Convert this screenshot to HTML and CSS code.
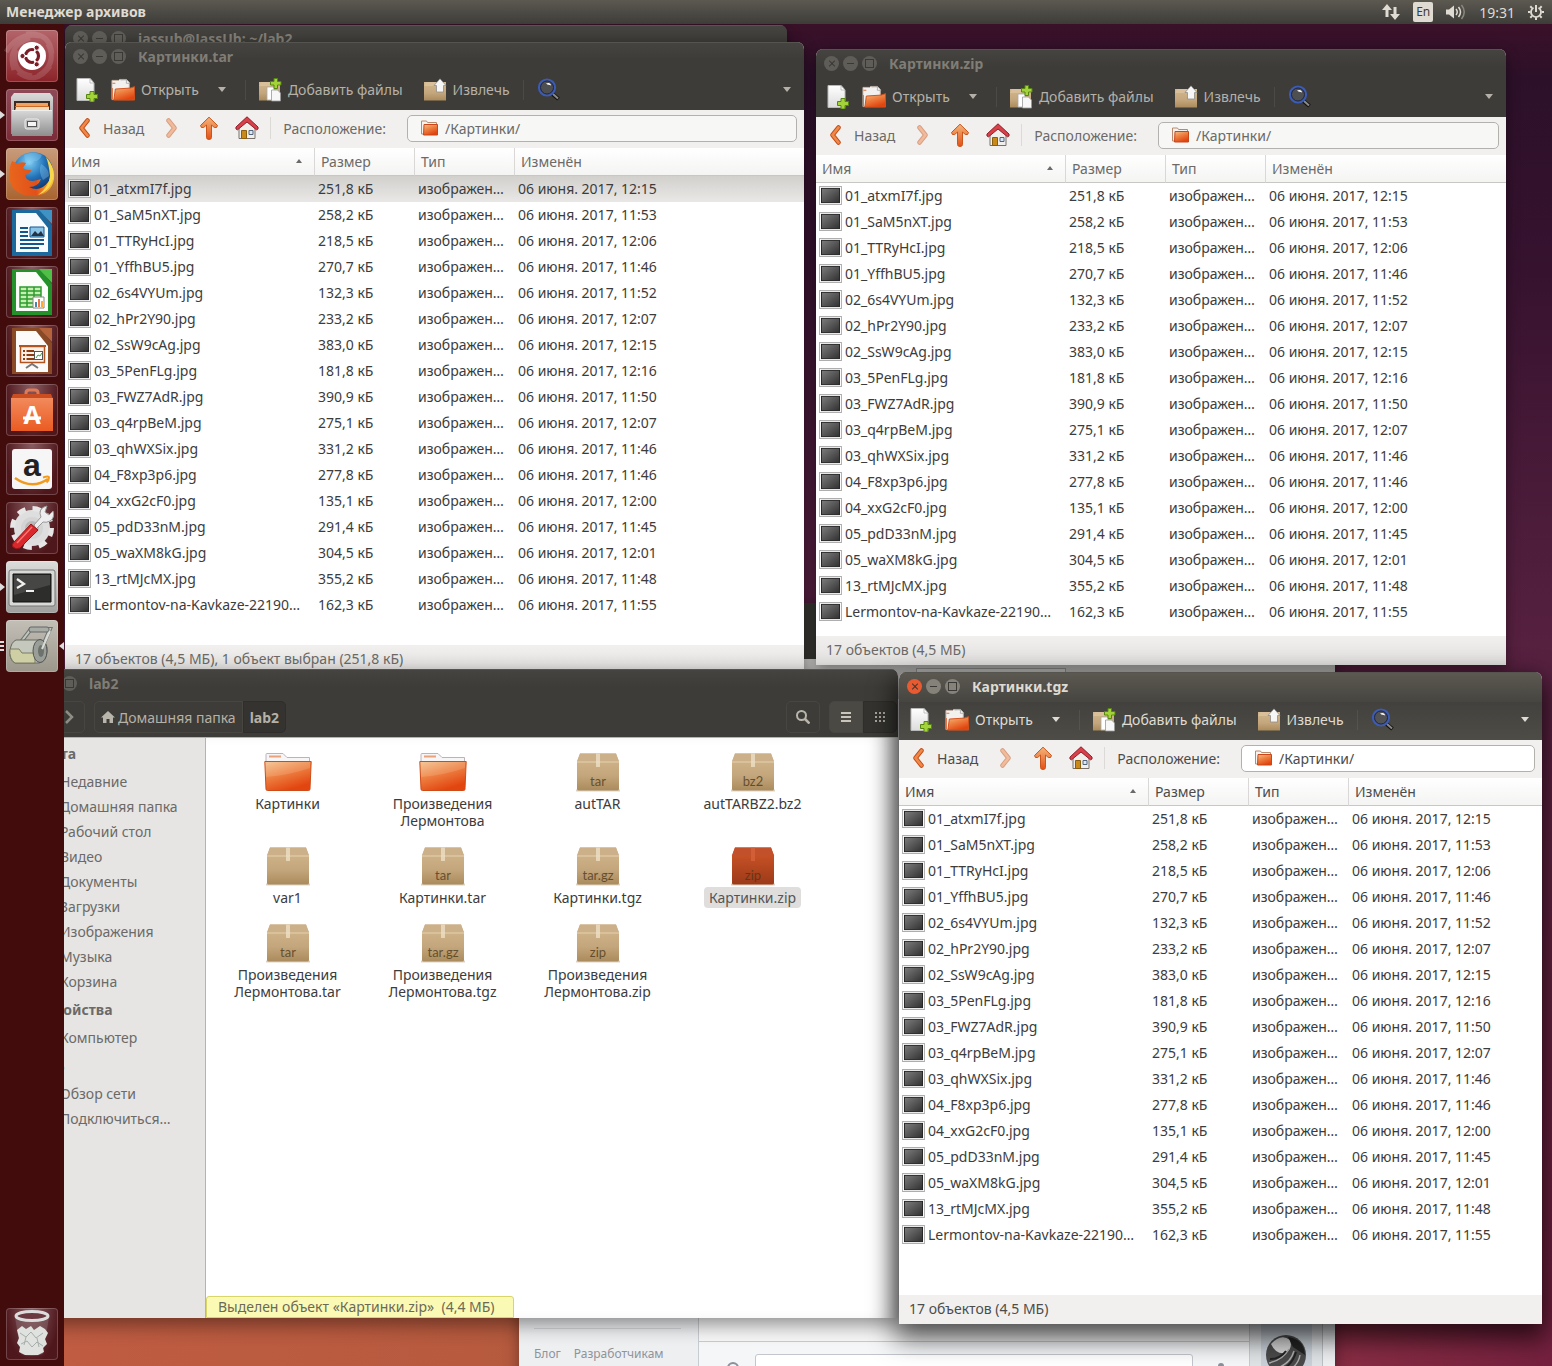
FILE: index.html
```html
<!DOCTYPE html>
<html lang="ru">
<head>
<meta charset="utf-8">
<title>Менеджер архивов</title>
<meta name="viewport" content="width=device-width, initial-scale=1">
<link rel="stylesheet" href="styles.css">
</head>
<body>
<svg class="sprite" width="0" height="0" aria-hidden="true">
  <defs>
    <linearGradient id="g-orange" x1="0" y1="0" x2="0" y2="1"><stop offset="0" stop-color="#f3b57c"/><stop offset="1" stop-color="#e64f14"/></linearGradient>
    <linearGradient id="g-folder" x1="0" y1="0" x2=".5" y2="1"><stop offset="0" stop-color="#f4c08a"/><stop offset=".45" stop-color="#ee8546"/><stop offset="1" stop-color="#e2450f"/></linearGradient>
    <linearGradient id="g-box" x1="0" y1="0" x2="0" y2="1"><stop offset="0" stop-color="#d2b78d"/><stop offset=".6" stop-color="#c4a67c"/><stop offset="1" stop-color="#a98b5c"/></linearGradient>
    <linearGradient id="g-boxred" x1="0" y1="0" x2="0" y2="1"><stop offset="0" stop-color="#d0562a"/><stop offset="1" stop-color="#9c3a18"/></linearGradient>
    <linearGradient id="g-paper" x1="0" y1="0" x2="0" y2="1"><stop offset="0" stop-color="#ffffff"/><stop offset="1" stop-color="#dcdcdc"/></linearGradient>
    <linearGradient id="g-dark" x1="0" y1="0" x2="1" y2="1"><stop offset="0" stop-color="#7d7d7d"/><stop offset="1" stop-color="#303030"/></linearGradient>
    <linearGradient id="g-steel" x1="0" y1="0" x2="0" y2="1"><stop offset="0" stop-color="#d9d9d9"/><stop offset="1" stop-color="#8e8e8e"/></linearGradient>
    <radialGradient id="g-globe" cx=".4" cy=".25" r=".8"><stop offset="0" stop-color="#7fd0f5"/><stop offset=".5" stop-color="#2372b8"/><stop offset="1" stop-color="#0c2e63"/></radialGradient>
    <linearGradient id="g-fox" x1="0" y1="0" x2="1" y2="0"><stop offset="0" stop-color="#e8661c"/><stop offset=".6" stop-color="#e2501a"/><stop offset="1" stop-color="#f9c936"/></linearGradient>
    <linearGradient id="g-bag" x1="0" y1="0" x2="0" y2="1"><stop offset="0" stop-color="#f28a5c"/><stop offset="1" stop-color="#ea5b22"/></linearGradient>
  </defs>

  <symbol id="i-thumb" viewBox="0 0 24 20"><rect x=".5" y=".5" width="23" height="19" fill="#fff" stroke="#aaa"/><rect x="2.500" y="2.500" width="19" height="15" fill="url(#g-dark)" stroke="#222"/></symbol>
  <symbol id="i-new" viewBox="0 0 24 24"><path d="M2 .5h13l4 4.500V22.500H2z" fill="url(#g-paper)" stroke="#b9b9b9"/><path d="M15 .5V5h4z" fill="#fff" stroke="#aaa" stroke-width=".7"/><path d="M15 13.500h4v3h3.500v4H19V24h-4v-3.500h-3.500v-4H15z" fill="#a3d339" stroke="#56860f"/></symbol>
  <symbol id="i-open" viewBox="0 0 25 24"><path d="M1 2h7l1-1h7l3 3v18H1z" fill="#f3f1ef" stroke="#c9b9ad"/><path d="M10 1.500h6V5h4" fill="#fff" stroke="#999" stroke-width=".8"/><path d="M1.500 5h3M1.500 10v12" stroke="#e06a3a"/><path d="M4.500 11 20 10l4.500-1.500V22.500H3z" fill="url(#g-folder)" stroke="#d0501c"/></symbol>
  <symbol id="i-add" viewBox="0 0 24 24"><path d="M1 4h21v18.500H1z" fill="url(#g-box)"/><path d="M1 8 3 4h19v4z" fill="#d9c09a"/><path d="M9 9h7v13H9z" fill="#fff" stroke="#aaa" stroke-width=".8"/><path d="M13.500 12h6l3 3v8h-9z" fill="#f7f7f7" stroke="#999" stroke-width=".8"/><path d="M16 .5h3.500v3H23V7h-3.500v3.500H16V7h-3.500V3.500H16z" fill="#a3d339" stroke="#56860f"/></symbol>
  <symbol id="i-extract" viewBox="0 0 24 24"><path d="M1 4h22v18.500H1z" fill="url(#g-box)"/><path d="M1 8 3 4h18l2 4z" fill="#d9c09a"/><path d="M17 .8 23 7.500h-2.500V14h-7V7.500H11z" fill="#f6f6f6" stroke="#8d8d8d" stroke-width=".8"/></symbol>
  <symbol id="i-find" viewBox="0 0 24 24"><path d="m15.500 16 6 5" stroke="#14120f" stroke-width="4"/><path d="m16 16 5 4.500" stroke="#8a8a8a" stroke-width="2"/><circle cx="10" cy="9.500" r="8" fill="#5a5c63" fill-opacity=".6" stroke="#3c5bb4" stroke-width="2.200"/><circle cx="10" cy="9.500" r="6.500" fill="none" stroke="#1c2648"/><path d="M9 5.500c3-1.500 5 0 5 2-2-.8-3-.3-5-2z" fill="#fff"/></symbol>
  <symbol id="i-back" viewBox="0 0 12 20"><path d="M9.500 2.500 3.500 10l6 7.500" fill="none" stroke="#c24c16" stroke-width="4.500" stroke-linecap="round" stroke-linejoin="round"/><path d="M9.500 2.500 3.500 10l6 7.500" fill="none" stroke="#f0884a" stroke-width="2.800" stroke-linecap="round" stroke-linejoin="round"/></symbol>
  <symbol id="i-up" viewBox="0 0 20 24"><path d="M10 1.200 18.500 9.500q-.3 3-3.200 2L12.500 9v12.500a2.500 2 0 0 1-5 0V9l-2.800 2.500q-2.900 1-3.200-2z" fill="url(#g-orange)" stroke="#c9561c" stroke-linejoin="round"/></symbol>
  <symbol id="i-home" viewBox="0 0 24 24"><path d="M4 11 12 4l8 7v11.500H4z" fill="#f1efec" stroke="#77706a"/><path d="M6.500 14.500h5v8h-5z" fill="#c98a1a" stroke="#8b5d0e"/><path d="M14 14.500h4v4h-4z" fill="#dbe6f4" stroke="#53637a"/><path d="M12 .8 1 11q-.8 2.500 1.500 2.800L12 6l9.500 7.800Q23.800 13.500 23 11z" fill="#d8404a" stroke="#8f1f2a" stroke-linejoin="round"/></symbol>
  <symbol id="i-folder-s" viewBox="0 0 17 16"><path d="M.5 14V1h5l1 1.500h9V14z" fill="#f7f2ee" stroke="#b98a70"/><path d="M3 4.500h13.500V15H2.500z" fill="url(#g-folder)" stroke="#c8471a"/></symbol>
  <symbol id="i-folder" viewBox="0 0 48 40"><path d="M2 16V2.500q0-1 1-1h16l4 4h22.500V16z" fill="#f7f5f6" stroke="#b9b4bb"/><path d="M5 4.500h12" stroke="#e9a27c" stroke-width="2"/><path d="M.8 9.500h46.400L46 37q0 1.500-1.500 1.500h-41Q2 38.500 2 37z" fill="url(#g-folder)" stroke="#cf4c18"/><path d="M2 25q24-2 44-9V10H1.500z" fill="#fff" opacity=".13"/></symbol>
  <symbol id="i-box" viewBox="0 0 44 40"><path d="M0 38.500h44" stroke="#a08050" stroke-opacity=".35" stroke-width="2"/><path d="M4 1.500h36l3 8V37q0 1.500-1.500 1.500h-39Q1 38.500 1 37V9.500z" fill="url(#g-box)"/><path d="M4 1.500h36l3 8H1z" fill="#cbb08a"/><path d="M1 10h42" stroke="#e6d2b0"/><path d="M20 1.500h4V15h-4z" fill="#efe2c8" opacity=".75"/></symbol>
  <symbol id="i-box-sel" viewBox="0 0 44 40"><path d="M0 38.500h44" stroke="#a08050" stroke-opacity=".35" stroke-width="2"/><path d="M4 1.500h36l3 8V37q0 1.500-1.500 1.500h-39Q1 38.500 1 37V9.500z" fill="url(#g-boxred)"/><path d="M4 1.500h36l3 8H1z" fill="#c2502a"/><path d="M20 1.500h4V15h-4z" fill="#d4623a" opacity=".8"/></symbol>
</svg>

<header class="panel">
  <h1 class="panel-title">Менеджер архивов</h1>
  <div class="indicators">
    <svg width="18" height="16" viewBox="0 0 18 16" fill="#dfdbd2"><path d="M5 0 0 6h3.500v7h3V6H10zM13 16l-5-6h3.500V3h3v7H18z"/></svg>
    <span class="lang">En</span>
    <svg width="20" height="16" viewBox="0 0 20 16" fill="none" stroke="#dfdbd2" stroke-width="1.500"><path d="M0 5.500h3L8 1.500v13L3 10.500H0z" fill="#dfdbd2" stroke="none"/><path d="M10 5q2.500 3 0 6M12.500 3q4 5 0 10"/><path d="M15.500 1q5.500 7 0 14" stroke="#8b877f"/></svg>
    <time>19:31</time>
    <svg width="16" height="16" viewBox="0 0 16 16" fill="none" stroke="#dfdbd2"><path d="M5.500 3.700a5 5 0 1 0 5 0" stroke-width="1.800"/><path d="M8 1v7" stroke-width="2"/><path d="M0 8h2.500M13.500 8H16M8 13.500V16M2.300 2.300l1.800 1.800M13.700 2.300l-1.800 1.800M2.300 13.700l1.800-1.800M13.700 13.700l-1.800-1.800" stroke-width="2"/></svg>
  </div>
</header>

<main class="desktop">
  <section class="window browser" aria-label="Браузер">
    <div class="browser-title"></div>
    <div class="browser-bar"><span class="browser-tab"></span></div>
    <div class="browser-body">
      <nav class="site-nav"><a href="#blog">Блог</a><a href="#dev">Разработчикам</a></nav>
      <div class="site-main"><div class="compose">
        <svg width="12" height="12" viewBox="0 0 12 12" fill="none" stroke="#8b909b" stroke-width="2"><path d="M1 6a5 5 0 0 1 10 0"/></svg>
        <input class="message" aria-label="Сообщение">
        <svg width="12" height="12" viewBox="0 0 12 12" fill="#8b909b"><circle cx="6" cy="4" r="3"/></svg>
      </div></div>
      <aside class="site-chat"><svg width="40" height="40" viewBox="0 0 40 40"><circle cx="20" cy="20" r="20" fill="#4a4a4a"/><path d="M5 9Q15-2 24 5q3 8-4 13Q10 20 5 9z" fill="#d4d4d4"/><path d="M22 2q16 2 17 18L27 12z" fill="#222"/><path d="M3 28q14-3 20-14M8 34q16-4 20-18M18 38q14-6 16-18" stroke="#aaa" stroke-width="1.500" fill="none"/><path d="M4 24q10 0 16-8M12 37q14-6 18-20" stroke="#222" stroke-width="2" fill="none"/></svg></aside>
    </div>
  </section>

  <section class="window terminal" aria-label="Терминал">
    <div class="titlebar">
      <button class="wb close" aria-label="Закрыть"></button><button class="wb min" aria-label="Свернуть"></button><button class="wb max" aria-label="Развернуть"></button>
      <h2>jassub@JassUb: ~/lab2</h2>
    </div>
  </section>

  <section class="window files" aria-label="lab2">
    <div class="titlebar">
      <button class="wb close" aria-label="Закрыть"></button><button class="wb min" aria-label="Свернуть"></button><button class="wb max" aria-label="Развернуть"></button>
      <h2>lab2</h2>
    </div>
    <div class="pathbar">
      <button class="pb forward" aria-label="Вперёд"><svg width="9" height="14" viewBox="0 0 9 14" fill="none" stroke="#8f8c83" stroke-width="2.500"><path d="m1 1 6 6-6 6"/></svg></button>
      <div class="crumbs">
        <button class="pb"><svg width="14" height="12" viewBox="0 0 14 12" fill="#b9b5aa"><path d="M7 0 0 6.500h2V12h3.500V8h3v4H12V6.500h2z"/></svg>Домашняя папка</button>
        <button class="pb current">lab2</button>
      </div>
      <button class="pb square" aria-label="Поиск"><svg width="14" height="14" viewBox="0 0 14 14" fill="none" stroke="#b9b5aa" stroke-width="2"><circle cx="5.500" cy="5.500" r="4.500"/><path d="m9 9 4.500 4.500" stroke-width="2.500"/></svg></button>
      <div class="views">
        <button class="pb square raised" aria-label="Список"><svg width="10" height="10" viewBox="0 0 10 10" fill="#c9c5bb"><path d="M0 0h10v2H0zM0 4h10v2H0zM0 8h10v2H0z"/></svg></button>
        <button class="pb square current" aria-label="Значки"><svg width="10" height="10" viewBox="0 0 10 10" fill="#a9a69c"><path d="M0 0h2v2H0zM4 0h2v2H4zM8 0h2v2H8zM0 4h2v2H0zM4 4h2v2H4zM8 4h2v2H8zM0 8h2v2H0zM4 8h2v2H4zM8 8h2v2H8z"/></svg></button>
      </div>
    </div>
    <div class="files-body">
      <nav class="places">
        <h3>Места</h3>
        <a href="#recent">Недавние</a><a href="#home">Домашняя папка</a><a href="#desktop">Рабочий стол</a><a href="#video">Видео</a><a href="#docs">Документы</a><a href="#downloads">Загрузки</a><a href="#images">Изображения</a><a href="#music">Музыка</a><a href="#trash">Корзина</a>
        <h3>Устройства</h3>
        <a href="#computer">Компьютер</a>
        <h3>Сеть</h3>
        <a href="#network">Обзор сети</a><a href="#connect">Подключиться…</a>
      </nav>
      <div class="icon-area">
        <ul class="icon-grid" id="icon-grid"></ul>
        <p class="tip">Выделен объект «Картинки.zip»&nbsp; (4,4 МБ)</p>
      </div>
    </div>
  </section>

  <nav class="launcher" aria-label="Панель запуска">
    <button class="tile ubuntu" aria-label="Поиск"><svg viewBox="0 0 52 52"><path d="M0 22Q12 2 34 6M8 40Q0 16 24 8M26 46Q4 42 10 20M44 36Q30 56 12 42M42 14Q52 34 32 46M20 4Q44 2 46 24" fill="none" stroke="#fff" stroke-opacity=".14" stroke-width="5"/><circle cx="26" cy="26" r="14" fill="#fff"/><circle cx="26" cy="26" r="6.500" fill="none" stroke="#7b1c26" stroke-width="3.200"/><path d="m26 26-9 0M26 26l4.500 8M26 26l4.500-8" stroke="#fff" stroke-width="2"/><circle cx="16.500" cy="26" r="2.600" fill="#7b1c26" stroke="#fff"/><circle cx="30.700" cy="17.700" r="2.600" fill="#7b1c26" stroke="#fff"/><circle cx="30.700" cy="34.300" r="2.600" fill="#7b1c26" stroke="#fff"/></svg></button>
    <button class="tile nautilus running" aria-label="Файлы"><svg viewBox="0 0 52 52"><path d="M8 4h36l3 4v37H5V8z" fill="url(#g-steel)"/><path d="M8 12h36v11H8z" fill="#3d2b22"/><path d="M10 14h32v4H10z" fill="#f2a25c"/><path d="M10 18h33v4H9z" fill="#f6d9b5"/><path d="M9 17.500h34" stroke="#cc6a2a"/><path d="M6 21h40v26H6z" fill="url(#g-steel)"/><path d="M6 21.500h40" stroke="#eee"/><rect x="19" y="30" width="14" height="10" rx="2" fill="#bbb" stroke="#eee"/><rect x="21.500" y="32.500" width="9" height="5" fill="#f5f5f5" stroke="#555"/></svg></button>
    <button class="tile firefox running" aria-label="Firefox"><svg viewBox="0 0 52 52"><circle cx="27" cy="24" r="20" fill="url(#g-globe)"/><path d="M18 7q10-5 18 0-3 7-8 6-2 5-8 4zM35 16q8 4 8 12l-6 4q-5-8-2-16z" fill="#8fcdf0" opacity=".35"/><path d="M6 13q3 1 5 3 4-3 9-1l-3 5q2 2 8 2 0 3-6 5 1 6 8 6 5-1 8-2-3 8-12 8 11 6 20-6 4-8 1-17 5 7 4 15-3 16-20 17Q8 48 4 33 2 22 6 13z" fill="url(#g-fox)"/><path d="M40 9q11 12 6 25-4 10-14 13 11-8 12-19-1-12-4-19z" fill="#f8d84a"/></svg></button>
    <button class="tile office" aria-label="Writer"><svg viewBox="0 0 52 52"><path d="M8 3h26l12 15v31H6V3z" fill="#1c699d"/><path d="M33 3h13v14z" fill="#3f93c4"/><path d="M10 6h20l12 15v24H10z" fill="#f8fbfd"/><path d="M14 21h8M14 25h8M14 29h8M14 33h24M14 37h24M14 41h19" stroke="#12578b" stroke-width="2"/><path d="M24 20h14v10H24z" fill="#8cc4e8" stroke="#12578b"/><path d="m25 29 4-5 3 3 3-3 3 5z" fill="#234"/></svg></button>
    <button class="tile office" aria-label="Calc"><svg viewBox="0 0 52 52"><path d="M8 3h26l12 15v31H6V3z" fill="#24912a"/><path d="M33 3h13v14z" fill="#4ec048"/><path d="M10 6h20l12 15v24H10z" fill="#fafdf8"/><path d="M14 21h21v20H14z" fill="#c5f0b0" stroke="#2d9b2f" stroke-width="1.500"/><path d="M14 25h21M14 29h21M14 33h21M14 37h21M21 21v20M28 21v20" stroke="#2d9b2f" stroke-width="1.500"/><path d="M27 31h11v11H27z" fill="#fff" stroke="#888"/><path d="M29 41v-5h2v5z" fill="#48a"/><path d="M32 41v-8h2v8z" fill="#e74"/><path d="M35 41v-6h2v6z" fill="#fa3"/></svg></button>
    <button class="tile office" aria-label="Impress"><svg viewBox="0 0 52 52"><path d="M8 3h26l12 15v31H6V3z" fill="#8a4a26"/><path d="M33 3h13v14z" fill="#b4633a"/><path d="M10 6h20l12 15v26H10z" fill="#fdfbf9"/><rect x="14.500" y="21.500" width="24" height="16" fill="#fdf0e6" stroke="#b2541f" stroke-width="1.500"/><path d="M13 21h27" stroke="#b2541f" stroke-width="2"/><path d="M17 26h11M17 30h11M17 34h11" stroke="#8e3b10" stroke-width="2" stroke-dasharray="2 1.500 8"/><rect x="28.500" y="26.500" width="8" height="8" fill="#fff" stroke="#555"/><path d="m30 33 2-3 2 1 2-3" stroke="#3a3" fill="none"/><path d="m20 43 6-4 6 4" fill="none" stroke="#777" stroke-width="2"/></svg></button>
    <button class="tile office" aria-label="Центр приложений"><svg viewBox="0 0 52 52"><path d="M20 14V9q0-3 3-3h6q3 0 3 3v5" fill="none" stroke="#e07a56" stroke-width="3"/><path d="M7 10h38l2 5H5z" fill="#c94d20"/><path d="M5 14h42v33H5z" fill="url(#g-bag)"/><text x="26" y="40" class="t-soft">A</text><path d="M17 34h18" stroke="#fff" stroke-width="3"/></svg></button>
    <button class="tile office" aria-label="Amazon"><svg viewBox="0 0 52 52"><rect x="6" y="6" width="40" height="40" rx="3" fill="#f6f6f6"/><text x="26" y="33" class="t-amazon">a</text><path d="M9 35q17 12 33 1" fill="none" stroke="#f19a1c" stroke-width="2.500"/><path d="M37 34.500q6-2 6 0 0 3-2.500 5" fill="none" stroke="#f19a1c" stroke-width="2"/></svg></button>
    <button class="tile office" aria-label="Параметры"><svg viewBox="0 0 52 52"><circle cx="26" cy="26" r="13.500" fill="none" stroke="#dedede" stroke-width="9"/><circle cx="26" cy="26" r="19.500" fill="none" stroke="#e6e6e6" stroke-width="5" stroke-dasharray="8.200 7.100"/><circle cx="26" cy="26" r="11" fill="#d4d4d4"/><circle cx="26" cy="26" r="7" fill="#b9b9b9"/><path d="m28 23 7-8q-3-7 3-10l3-1-2 6 4 3 4-4q2 7-3 10-4 2-7 1l-7 7z" fill="#eee" stroke="#999"/><path d="m8 40 17-18 7 6-18 18q-4 2-7-1-2-2 1-5z" fill="#d8282c" stroke="#9a1517"/><path d="m11 41 15-16" stroke="#f27a74" stroke-width="1.500"/></svg></button>
    <button class="tile steel running" aria-label="Терминал"><svg viewBox="0 0 52 52"><rect x="3" y="9" width="46" height="36" rx="2" fill="#d9d9d7" stroke="#777"/><path d="M7 13h38v28H7z" fill="#2d2d2b" stroke="#111"/><path d="M8 14h36v10L8 34z" fill="#fff" opacity=".12"/><path d="m11 18 7 5-7 4M20 30h8" fill="none" stroke="#f1f1f1" stroke-width="2.200"/></svg></button>
    <button class="tile archive active" aria-label="Менеджер архивов"><svg viewBox="0 0 52 52"><path d="m15 22 10-13h19L36 28" fill="none" stroke="#6e736d" stroke-width="4"/><path d="m15 22 10-13h19L36 28" fill="none" stroke="#c2c6c0" stroke-width="2"/><rect x="23" y="7" width="20" height="5" rx="2" fill="#a7aca6" stroke="#666"/><path d="M10 20h25q7 2 6 12-1 10-8 11H9q-6-3-5-12 1-9 6-11z" fill="#c5c9bd" stroke="#666a60"/><path d="M4 29h9l3 4h13v10H9q-6-4-5-14z" fill="#cfcfa6" stroke="#7b7d63"/><ellipse cx="34" cy="31" rx="7" ry="11.500" fill="#999e98" stroke="#555"/><ellipse cx="35" cy="31" rx="3" ry="6" fill="#6d726c"/><path d="m36 29 8-18" stroke="#d8dad6" stroke-width="2"/></svg></button>
    <button class="tile office trash" aria-label="Корзина"><svg viewBox="0 0 52 52"><path d="M9 9 15 46q11 4 22 0L43 9z" fill="#8c7075" fill-opacity=".45"/><path d="m11 22 5-4 4 3 5-3 3 4 6-4 5 3 3 4-3 6 2 5-4 4 1 4-6 3H19l-6-3 1-5-3-4 2-5z" fill="#dfe2df"/><path d="m14 25 6 4 5-5 5 6 7-5M15 36l6-3 5 6 5-5 6 4M20 29l-2 8M31 30l2 9" stroke="#a7aeaa" fill="none"/><ellipse cx="26" cy="8" rx="16" ry="4.500" fill="#6a3a40" stroke="#dcdcdc" stroke-width="3"/></svg></button>
  </nav>
</main>

<template id="archive-window">
  <section class="window archive-win">
    <div class="titlebar">
      <button class="wb close" aria-label="Закрыть"></button><button class="wb min" aria-label="Свернуть"></button><button class="wb max" aria-label="Развернуть"></button>
      <h2></h2>
    </div>
    <div class="toolbar">
      <button class="tb new" aria-label="Создать"><svg width="24" height="24"><use href="#i-new"/></svg></button>
      <button class="tb"><svg width="24" height="24"><use href="#i-open"/></svg>Открыть</button>
      <button class="tb arrow" aria-label="Недавние"><i class="caret"></i></button>
      <span class="sep"></span>
      <button class="tb add"><svg width="24" height="24"><use href="#i-add"/></svg>Добавить файлы</button>
      <button class="tb extract"><svg width="24" height="24"><use href="#i-extract"/></svg>Извлечь</button>
      <span class="sep"></span>
      <button class="tb find" aria-label="Найти"><svg width="24" height="24"><use href="#i-find"/></svg></button>
      <button class="tb more" aria-label="Меню"><i class="caret"></i></button>
    </div>
    <div class="location">
      <button class="nav back"><svg width="12" height="20"><use href="#i-back"/></svg>Назад</button>
      <button class="nav next" aria-label="Вперёд" disabled><svg width="12" height="20"><use href="#i-back"/></svg></button>
      <button class="nav" aria-label="Вверх"><svg width="20" height="24"><use href="#i-up"/></svg></button>
      <button class="nav home" aria-label="Домой"><svg width="24" height="24"><use href="#i-home"/></svg></button>
      <span class="sep"></span>
      <label>Расположение:</label>
      <div class="field"><svg width="17" height="16"><use href="#i-folder-s"/></svg><input value="/Картинки/"></div>
    </div>
    <div class="list">
      <table>
        <colgroup><col class="c-name"><col class="c-col"><col class="c-col"><col></colgroup>
        <thead><tr><th>Имя<i class="sort"></i></th><th>Размер</th><th>Тип</th><th>Изменён</th></tr></thead>
        <tbody></tbody>
      </table>
    </div>
    <p class="status"></p>
  </section>
</template>
<script src="app.js"></script>
</body>
</html>
```
FILE: styles.css
```css
* { box-sizing: border-box; }

body {
  margin: 0;
  height: 100vh;
  display: flex;
  flex-direction: column;
  overflow: hidden;
  font: 14px/17px "Noto Sans", "Open Sans", sans-serif;
  color: #3c3c3c;
}
h1, h2, h3, p, ul { margin: 0; padding: 0; font-size: 14px; }
button, input { font: inherit; color: inherit; border: 0; padding: 0; background: none; }
button { display: flex; align-items: center; white-space: nowrap; }
svg { display: block; flex: none; }
.sprite { position: absolute; }

/* Top panel */
.panel {
  flex: none;
  height: 24px;
  display: flex;
  align-items: center;
  justify-content: space-between;
  padding: 0 8px 0 6px;
  background: linear-gradient(#5c5951, #3d3c38);
  color: #dfdbd2;
}
.panel-title { line-height: 24px; }
.indicators { display: flex; align-items: center; gap: 13px; }
.lang {
  background: #dfdbd2;
  color: #3c3b37;
  border-radius: 2px;
  width: 20px;
  font-size: 12px;
  line-height: 20px;
  text-align: center;
}

/* Desktop */
.desktop {
  position: relative;
  flex: 1;
  overflow: hidden;
  background:
    linear-gradient(90deg, #c05c42 0, #b65a3e 34%, #8c2f45 84%, #74203e 100%) bottom / 100% 60px no-repeat,
    linear-gradient(180deg, #3a1128 0, #2c1029 4%, #36122f 18%, #55203f 45%, #642344 62%, #74203e 100%);
}

/* Launcher */
.launcher {
  position: absolute;
  z-index: 10;
  top: 0;
  bottom: 0;
  left: 0;
  width: 64px;
  padding: 6px 0 6px 6px;
  display: flex;
  flex-direction: column;
  gap: 7px;
  background: #420c0d;
}
.tile {
  position: relative;
  width: 52px;
  height: 52px;
  border-radius: 4px;
  box-shadow: inset 0 0 0 1px rgba(255, 255, 255, .2);
}
.tile svg { width: 52px; height: 52px; overflow: visible; }
.ubuntu { background: linear-gradient(#b4656a, #8b2329); }
.nautilus { background: linear-gradient(#8f4a57, #7c2b38); }
.firefox { background: linear-gradient(#c99c7c, #a8642f); }
.office { background: radial-gradient(at 50% 0, #895d62, #4e171c 75%); }
.steel { background: linear-gradient(#dcdcdb, #9f9f9d); }
.archive { background: linear-gradient(#c3bfb7, #9b978b); }
.trash { margin-top: auto; }
.running::before {
  content: "";
  position: absolute;
  left: -6px;
  top: 22px;
  border: 4px solid transparent;
  border-left: 5px solid #ddd;
  border-right: 0;
}
.active::before {
  content: "";
  position: absolute;
  left: -6px;
  top: 21px;
  width: 4px;
  height: 10px;
  background: repeating-linear-gradient(#ddd 0 2px, transparent 2px 4px);
}
.active::after {
  content: "";
  position: absolute;
  right: -6px;
  top: 22px;
  border: 4px solid transparent;
  border-right: 5px solid #ddd;
  border-left: 0;
}
.t-soft { font: bold 25px "Open Sans", sans-serif; fill: #fff; text-anchor: middle; }
.t-amazon { font: bold 32px "Liberation Sans", sans-serif; fill: #222; text-anchor: middle; }

/* Window frame */
.window {
  position: absolute;
  display: flex;
  flex-direction: column;
  border-radius: 7px 7px 0 0;
  background: #fff;
  box-shadow: 0 4px 14px rgba(0, 0, 0, .4);
  overflow: hidden;
}
.titlebar {
  flex: none;
  height: 30px;
  display: flex;
  align-items: center;
  gap: 4px;
  padding: 0 0 2px 8px;
  background: linear-gradient(#454440, #3d3c38 60%);
  box-shadow: inset 0 1px #56544e;
  color: #807d76;
}
.titlebar h2 { margin-left: 8px; }
.wb {
  position: relative;
  width: 15px;
  height: 15px;
  border-radius: 50%;
  background: #5f5d58;
  color: #3a3935;
  justify-content: center;
}
.wb::before, .wb.close::after { content: ""; position: absolute; }
.wb.min::before { width: 7px; height: 1px; background: currentColor; }
.wb.max::before { width: 7px; height: 7px; border: 1px solid currentColor; }
.wb.close::before, .wb.close::after { width: 8px; height: 1px; background: currentColor; transform: rotate(45deg); }
.wb.close::after { transform: rotate(-45deg); }

/* Archive manager */
.toolbar {
  flex: none;
  height: 38px;
  display: flex;
  align-items: center;
  padding: 0 10px 3px;
  background: #3d3c38;
  color: #b5b1a8;
}
.tb { gap: 6px; }
.tb.new { margin-right: 12px; }
.tb.arrow { width: 46px; justify-content: center; }
.caret { border: 4px solid transparent; border-top: 5px solid #b5b1a8; border-bottom: 0; }
.sep { width: 1px; height: 20px; background: rgba(128, 128, 128, .22); }
.tb.add { margin-left: 12px; }
.tb.extract { margin: 0 13px 0 20px; }
.tb.find { margin-left: 13px; }
.tb.more { margin-left: auto; margin-right: 3px; }
.location {
  flex: none;
  height: 38px;
  display: flex;
  align-items: center;
  padding: 0 7px 2px 13px;
  background: #f1f0ee;
  color: #6b6a68;
}
.nav { gap: 13px; }
.nav + .nav { margin-left: 18px; }
.nav + .next { margin: 0 3px 0 22px; }
.nav + .home { margin-left: 16px; }
.next svg { transform: scaleX(-1); opacity: .5; }
.location .sep { height: 22px; margin: 0 12px 0 11px; background: #dcdad7; }
.field {
  flex: 1;
  height: 27px;
  margin-left: 21px;
  padding-left: 13px;
  display: flex;
  align-items: center;
  gap: 7px;
  border: 1px solid #b3b1ae;
  border-radius: 5px;
  background: #f7f7f6;
}
.field input { flex: 1; min-width: 0; outline: 0; }
.list { flex: 1; background: #fff; }
table { width: 100%; table-layout: fixed; border-collapse: separate; border-spacing: 0; }
.c-name { width: 250px; }
.c-col { width: 100px; }
th {
  position: relative;
  height: 28px;
  padding: 0 6px;
  text-align: left;
  font-weight: 400;
  color: #6b6a68;
  background: linear-gradient(#fff, #f4f4f3);
  border-right: 1px solid #d9d8d6;
  border-bottom: 1px solid #c9c7c4;
}
th:last-child { border-right: 0; }
.sort { float: right; margin: 6px 6px 0 0; border: 3px solid transparent; border-bottom: 4px solid #6b6a68; border-top: 0; }
td { height: 26px; padding: 0 0 2px 3px; white-space: nowrap; overflow: hidden; }
.file { display: flex; align-items: center; gap: 3px; }
.selected td { background: linear-gradient(#d2d0cd, #e9e8e6); }
.status {
  flex: none;
  padding: 5px 10px 7px;
  background: linear-gradient(#f1f0ee, #e2e1df);
  color: #6b6a68;
  font-weight: 400;
}

/* Focused window */
.focused { box-shadow: 0 10px 26px 4px rgba(0, 0, 0, .7); z-index: 3; }
.focused .titlebar { background: linear-gradient(#5c5951, #464540); color: #dfdbd2; }
.focused .toolbar { background: linear-gradient(#42413d, #4e4c46); color: #dfdbd2; }
.focused .wb { background: #85827a; }
.focused .wb.close { background: #ea5a30; }
.focused .caret { border-top-color: #dfdbd2; }
.focused .location, .focused th, .focused .status { color: #4c4c4c; }
.focused .status { background: #f1f0ee; }
.focused .field { background: #fff; }

/* Background windows */
.terminal { left: 65px; top: 1px; width: 722px; height: 600px; background: #3d3c38; }
.terminal .titlebar { height: 28px; }
.browser { left: 519px; top: 579px; width: 816px; bottom: -20px; border-radius: 0; }
.browser-title { flex: none; height: 56px; background: #34332f; }
.browser-bar { flex: none; height: 40px; padding-top: 9px; background: #c3c2c0; }
.browser-tab { display: block; width: 150px; height: 25px; margin-left: 397px; border: 1px solid #999; background: #d0cfcd; }
.browser-body { flex: 1; display: flex; align-items: flex-end; background: #edeff1; }
.site-nav {
  width: 147px;
  height: 58px;
  display: flex;
  gap: 13px;
  margin: 0 17px 0 15px;
  padding-top: 16px;
  border-top: 1px solid #d3d5d9;
}
.site-nav a { color: #8f939a; text-decoration: none; font-size: 12px; }
.site-main { flex: 1; height: 100%; display: flex; align-items: flex-end; border: solid #c8cbd0; border-width: 0 1px; background: #f7f7f8; }
.compose { flex: 1; height: 45px; display: flex; gap: 16px; padding: 12px 22px 0 28px; border-top: 1px solid #c8cbd0; background: #f5f6f8; }
.compose svg { margin-top: 8px; }
.message { flex: 1; margin-right: 6px; border: 1px solid #c3c6cc; border-radius: 3px 3px 0 0; background: #fff; }
.site-chat { width: 73px; height: 100%; display: flex; align-items: flex-end; justify-content: center; margin-right: 12px; padding-bottom: 11px; border-right: 1px solid #bcbfc4; background: linear-gradient(90deg, #e0e3e6 11px, #c9d0d8 11px 62px, #e0e3e6 62px); }

/* File manager */
.files { left: 16px; top: 645px; width: 882px; height: 649px; z-index: 2; box-shadow: 0 6px 20px rgba(0, 0, 0, .45); }
.pathbar {
  flex: none;
  height: 38px;
  display: flex;
  align-items: flex-start;
  padding: 2px 1px 0 35px;
  background: #3d3c38;
  color: #b5b1a8;
}
.pb { height: 32px; padding: 0 6px; gap: 3px; border: 1px solid #474640; border-radius: 5px; }
.pb.forward { width: 34px; margin-right: 9px; padding-left: 13px; }
.crumbs { display: flex; flex: 1; }
.crumbs .pb:first-child, .views .pb:first-child { border-radius: 5px 0 0 5px; }
.crumbs .pb:last-child, .views .pb:last-child { border-radius: 0 5px 5px 0; }
.pb.current { background: #34332f; border-color: #2f2e2b; font-weight: 700; }
.pb.square { width: 34px; padding: 0; justify-content: center; }
.pb.raised { background: #4a4943; }
.views { display: flex; margin-left: 9px; }
.files-body { flex: 1; display: flex; border-top: 1px solid #b5b3b0; }
.places { width: 190px; background: #e6e5e3; border-right: 1px solid #b5b3b0; color: #6b6a68; }
.places h3 { padding-left: 16px; line-height: 31px; }
.places a { display: block; padding-left: 44px; line-height: 25px; color: inherit; text-decoration: none; }
.icon-area { position: relative; flex: 1; box-shadow: inset -20px 0 20px -14px rgba(0, 0, 0, .3); }
.icon-grid {
  display: grid;
  grid-template-columns: repeat(4, 155px);
  row-gap: 15px;
  padding: 14px 4px;
  list-style: none;
}
.icon-grid li { display: flex; flex-direction: column; align-items: center; gap: 1px; text-align: center; }
.icon-grid span { padding: 2px 5px; border-radius: 4px; white-space: pre-line; }
.icon-grid .picked { background: #dfdedd; color: #555; }
.kind { font: 13px "Lato", sans-serif; fill: #4a3417; fill-opacity: .75; text-anchor: middle; }
.tip {
  position: absolute;
  left: 0;
  bottom: 0;
  padding: 1px 18px 2px 11px;
  background: #fbfab5;
  border: 1px solid #d8d56a;
  border-radius: 3px 3px 0 0;
  color: #6b6a58;
  font-weight: 400;
}

/* Archive window placement on the desktop */
.win-tar { left: 65px; top: 18px; width: 739px; height: 632px; }
.win-zip { left: 816px; top: 25px; width: 690px; height: 616px; }
.win-tgz { left: 899px; top: 648px; width: 643px; height: 652px; }
```
FILE: app.js
```js
const files = [
  ["01_atxmI7f.jpg", "251,8", "12:15"],
  ["01_SaM5nXT.jpg", "258,2", "11:53"],
  ["01_TTRyHcI.jpg", "218,5", "12:06"],
  ["01_YffhBU5.jpg", "270,7", "11:46"],
  ["02_6s4VYUm.jpg", "132,3", "11:52"],
  ["02_hPr2Y90.jpg", "233,2", "12:07"],
  ["02_SsW9cAg.jpg", "383,0", "12:15"],
  ["03_5PenFLg.jpg", "181,8", "12:16"],
  ["03_FWZ7AdR.jpg", "390,9", "11:50"],
  ["03_q4rpBeM.jpg", "275,1", "12:07"],
  ["03_qhWXSix.jpg", "331,2", "11:46"],
  ["04_F8xp3p6.jpg", "277,8", "11:46"],
  ["04_xxG2cF0.jpg", "135,1", "12:00"],
  ["05_pdD33nM.jpg", "291,4", "11:45"],
  ["05_waXM8kG.jpg", "304,5", "12:01"],
  ["13_rtMJcMX.jpg", "355,2", "11:48"],
  ["Lermontov-na-Kavkaze-22190…", "162,3", "11:55"],
];

const archives = [
  { type: "tar", selected: 0, status: "17 объектов (4,5 МБ), 1 объект выбран (251,8 кБ)" },
  { type: "zip", status: "17 объектов (4,5 МБ)" },
  { type: "tgz", focused: true, status: "17 объектов (4,5 МБ)" },
];

const desktop = document.querySelector(".desktop");
const template = document.getElementById("archive-window");

for (const archive of archives) {
  const win = template.content.cloneNode(true).querySelector(".window");
  win.classList.add("win-" + archive.type);
  if (archive.focused) win.classList.add("focused");
  win.querySelector("h2").textContent = "Картинки." + archive.type;
  win.querySelector(".status").textContent = archive.status;
  win.querySelector("input").id = "path-" + archive.type;
  win.querySelector("label").htmlFor = "path-" + archive.type;
  win.querySelector("tbody").innerHTML = files.map(([name, size, time], i) =>
    `<tr${i === archive.selected ? ' class="selected"' : ""}>
      <td><div class="file"><svg width="23" height="19"><use href="#i-thumb"/></svg>${name}</div></td>
      <td>${size} кБ</td><td>изображен…</td><td>06 июня. 2017, ${time}</td></tr>`).join("");
  desktop.append(win);
}

const items = [
  ["Картинки"],
  ["Произведения\nЛермонтова"],
  ["autTAR", "tar"],
  ["autTARBZ2.bz2", "bz2"],
  ["var1", ""],
  ["Картинки.tar", "tar"],
  ["Картинки.tgz", "tar.gz"],
  ["Картинки.zip", "zip", true],
  ["Произведения\nЛермонтова.tar", "tar"],
  ["Произведения\nЛермонтова.tgz", "tar.gz"],
  ["Произведения\nЛермонтова.zip", "zip"],
];

document.getElementById("icon-grid").innerHTML = items.map(([name, kind, picked]) => {
  const icon = kind === undefined
    ? '<svg width="48" height="40"><use href="#i-folder"/></svg>'
    : `<svg width="44" height="40"><use href="#i-box${picked ? "-sel" : ""}"/><text class="kind" x="22" y="34">${kind}</text></svg>`;
  return `<li>${icon}<span${picked ? ' class="picked"' : ""}>${name}</span></li>`;
}).join("");
```
